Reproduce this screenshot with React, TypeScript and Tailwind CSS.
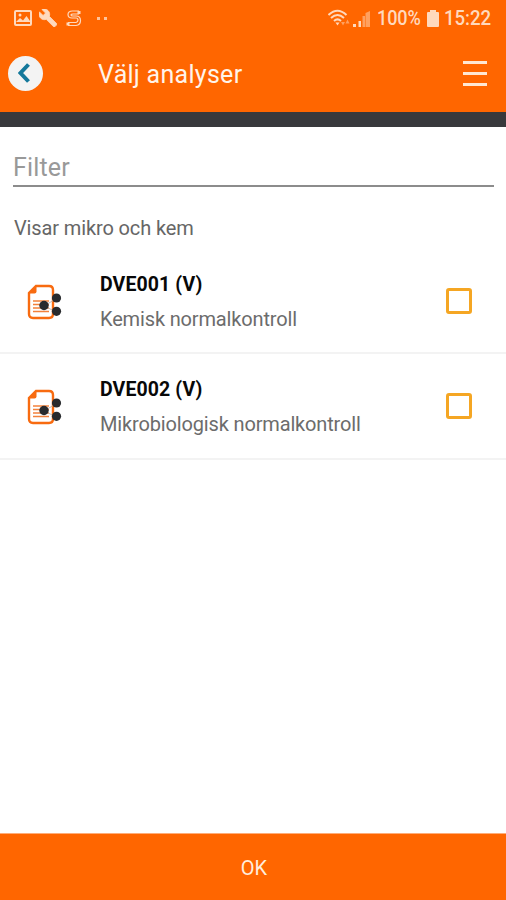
import React, { useState } from "react";

interface Analysis {
  code: string;
  name: string;
}

const analyses: Analysis[] = [
  { code: "DVE001 (V)", name: "Kemisk normalkontroll" },
  { code: "DVE002 (V)", name: "Mikrobiologisk normalkontroll" },
];

const StatusBar = () => (
  <div className="flex h-9 items-center text-[#ffd9bd]">
    {/* Notifications */}
    <svg className="ml-[14px] h-[18px] w-[18px]" viewBox="0 0 18 18" fill="none">
      <rect x="1" y="2" width="16" height="14" rx="1" stroke="currentColor" strokeWidth="2" />
      <path d="M2 13l4-4 3 2.500L12.500 7l3.500 5v1z" fill="currentColor" />
      <circle cx="6" cy="6" r="1.5" fill="currentColor" />
    </svg>
    <svg className="ml-[7px] h-[18px] w-[18px]" viewBox="1 1 22 22" fill="currentColor" stroke="currentColor" strokeWidth="1">
      <path d="M22.7 19l-9.1-9.1c.9-2.3.4-5-1.500-6.900-2-2-5-2.400-7.400-1.300L9 6 6 9 1.600 4.700C.400 7.100.900 10.100 2.900 12.100c1.900 1.900 4.600 2.400 6.900 1.500l9.100 9.100c.4.4 1 .4 1.400 0l2.300-2.300c.5-.4.5-1.100.1-1.400z" />
    </svg>
    <svg className="ml-[9px] h-[19px] w-4" viewBox="0 0 16 19" fill="none" stroke="currentColor">
      <path d="M13 2H6.500Q2 2 2 5.500T6 9h4q2 0 2 2t-2 2.500H2" strokeWidth="1.200" />
      <path d="M13 5H7Q5 5 5 6T7 7h3q4.500 0 4.500 4.500T10 16.500H2" strokeWidth="1.200" />
      <path d="M.500 15h3M11.500 3.500h3" strokeWidth="3" />
    </svg>
    <div className="ml-[15px] flex gap-[4px]">
      <span className="h-[3px] w-[3px] bg-[#ffc39a]" />
      <span className="h-[3px] w-[3px] bg-[#ffc39a]" />
    </div>

    {/* Connection, battery and clock */}
    <div className="ml-auto flex items-center pr-[14px]">
      <svg className="h-[18px] w-[22px]" viewBox="0 0 22 18" fill="none" stroke="currentColor" strokeWidth="2">
        <path d="M.5 6Q9.500-2.500 18.500 6M3 9Q9.500 3 16 9M6 12Q9.500 8.800 13 12" />
        <path d="M7.500 13.500h4l-2 3z" fill="currentColor" stroke="none" />
        <path d="M13 13l2 3.500 2-3.500zM17.500 14.500l2-4 2 4z" fill="currentColor" stroke="none" opacity=".5" />
      </svg>
      <svg className="ml-[3px] h-[17px] w-[18px]" viewBox="0 0 18 17" fill="currentColor">
        <path d="M0 14h3v3H0zM5.500 11H8v6H5.500z" />
        <path d="M9.500 6h2.500v11H9.500zM12.500 3L17 1v16h-4.500z" opacity=".5" />
      </svg>
      <span className="ml-[6px] w-[44px] origin-left scale-x-[0.86] text-[21px] leading-9 font-medium tracking-[-0.1px] whitespace-nowrap">100%</span>
      <svg className="ml-[6px] h-[17px] w-[12px]" viewBox="0 0 12 17" fill="currentColor">
        <path d="M3 0h6v2h2q1 0 1 1v13q0 1-1 1H1q-1 0-1-1V3q0-1 1-1h2z" />
      </svg>
      <span className="ml-[5px] w-[48px] origin-left scale-x-[0.89] text-[21px] leading-9 font-medium tracking-[-0.1px] whitespace-nowrap">15:22</span>
    </div>
  </div>
);

const AnalysisIcon = () => (
  <svg className="h-9 w-9 shrink-0" viewBox="0 0 36 36" fill="none">
    <path
      d="M9 2H22Q26 2 26 6V30Q26 34 22 34H6Q2 34 2 30V9z"
      stroke="#f86b10"
      strokeWidth="2.400"
    />
    <path d="M1.500 9.500L9.500 1.500V7.500Q9.500 9.500 7.500 9.500z" fill="#f86b10" />
    <path d="M6 17h16M6 20.500h16M6 24h16M6 27.500h16" stroke="#f3813b" strokeWidth="1.500" />
    <path d="M17 22L29.500 14.500M17 22l12.500 6" stroke="#c9b8ad" strokeWidth="1" />
    <circle cx="17" cy="21.500" r="4.700" fill="#292b2e" />
    <circle cx="29.500" cy="14" r="4.600" fill="#292b2e" />
    <circle cx="29.500" cy="27.300" r="4.600" fill="#292b2e" />
  </svg>
);

const AnalysisRow = ({ analysis }: { analysis: Analysis }) => {
  const [checked, setChecked] = useState(false);

  return (
    <div className="flex h-[105px] border-b-2 border-[#f3f3f3] pl-[27px] last:h-[106px]">
      <div className="mt-[35px] w-[73px]">
        <AnalysisIcon />
      </div>
      <div className="flex-1 pt-[23px]">
        <p className="text-[19.500px] leading-[26px] font-bold tracking-[0.1px] text-[#080808]">{analysis.code}</p>
        <p className="mt-[8px] text-[20px] leading-[26px] tracking-[-0.150px] text-[#6c6c6c]">{analysis.name}</p>
      </div>
      <button
        role="checkbox"
        aria-checked={checked}
        aria-label={analysis.code}
        onClick={() => setChecked((prev) => !prev)}
        className={`mt-[39px] mr-[34px] h-[26px] w-[26px] rounded-[3px] border-3 border-[#f5a623] ${
          checked ? "bg-[#f5a623]" : ""
        }`}
      />
    </div>
  );
};

export default function App() {
  const [filter, setFilter] = useState("");
  const visible = analyses.filter((a) =>
    `${a.code} ${a.name}`.toLowerCase().includes(filter.toLowerCase())
  );

  return (
    <div className="flex h-[900px] w-[506px] flex-col overflow-hidden bg-white font-[Roboto,sans-serif]">
      <header className="h-[127px] border-b-[15px] border-[#38393c] bg-[#ff6600]">
        <StatusBar />
        <div className="flex h-[74px] items-center pl-2">
          <button className="flex h-[35px] w-[35px] items-center justify-center rounded-full bg-[#f3f3f3]" aria-label="Tillbaka">
            <svg className="mr-[4px] h-5 w-3" viewBox="0 0 12 20" fill="none">
              <path d="M10.500 1.500L2.500 10l8 8.500" stroke="#14789b" strokeWidth="4" />
            </svg>
          </button>
          <h1 className="mt-[3px] ml-[55px] text-[25px] leading-[30px] tracking-[0.280px] text-[#fff4ea]">Välj analyser</h1>
          <button className="mr-[19px] ml-auto flex flex-col gap-[8px]" aria-label="Meny">
            <span className="h-[3px] w-6 bg-[#ffe7d2]" />
            <span className="h-[3px] w-6 bg-[#ffe7d2]" />
            <span className="h-[3px] w-6 bg-[#ffe7d2]" />
          </button>
        </div>
      </header>

      <main className="flex-1">
        <div className="pt-[20px] pr-[12px] pl-[13px]">
          <input
            value={filter}
            onChange={(e) => setFilter(e.target.value)}
            placeholder="Filter"
            className="block h-[40px] w-full border-b-2 border-[#8c8c8c] pt-[2px] text-[25px] tracking-[0.150px] text-[#666666] outline-none placeholder:text-[#999999]"
          />
        </div>
        <p className="mt-[28px] pl-[14px] text-[20px] leading-[26px] tracking-[-0.120px] text-[#666666]">Visar mikro och kem</p>
        <div className="mt-[8px]">
          {visible.map((analysis) => (
            <AnalysisRow key={analysis.code} analysis={analysis} />
          ))}
        </div>
      </main>

      <button className="h-[67px] border-t border-[#ffad78] bg-[#ff6600] pt-px pl-[2px] text-[20px] text-[#ffecdc]">OK</button>
    </div>
  );
}
